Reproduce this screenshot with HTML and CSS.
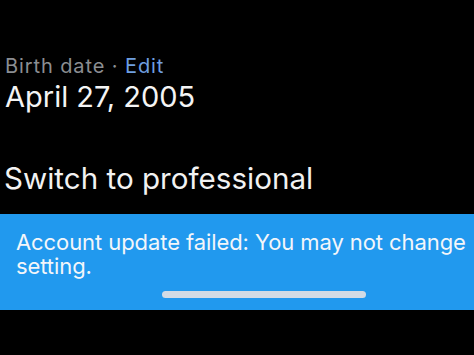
FILE: index.html
```html
<!DOCTYPE html>
<html>
<head>
<meta charset="utf-8">
<link rel="stylesheet" href="styles.css">
</head>
<body>
<div class="screen">
  <section class="info">
    <div class="label">Birth date · <span class="edit">Edit</span></div>
    <div class="value">April 27, 2005</div>
    <div class="switch">Switch to professional</div>
  </section>
  <section class="toast">
    <p class="msg">Account update failed: You may not change setting.</p>
    <div class="handle"></div>
  </section>
</div>
</body>
</html>
```
FILE: styles.css
```css
html, body {
  margin: 0;
  padding: 0;
  background: #000;
}
.screen {
  width: 474px;
  height: 355px;
  background: #000;
  font-family: Inter, "Liberation Sans", sans-serif;
  display: flex;
  flex-direction: column;
  overflow: hidden;
}
.info {
  padding: 52px 0 0 4px;
  height: 214px;
  flex: none;
  box-sizing: border-box;
}
.label {
  color: #8b8e92;
  font-size: 20px;
  letter-spacing: 0.9px;
  line-height: 28px;
  padding-left: 1px;
}
.edit {
  color: #6f9fe0;
}
.value {
  color: #f4f4f4;
  font-size: 29px;
  line-height: 34px;
  padding-left: 1px;
}
.switch {
  color: #f2f2f2;
  font-size: 29.6px;
  line-height: 36px;
  margin-top: 46px;
}
.toast {
  background: #2199ee;
  height: 96px;
  flex: none;
  padding: 16px 0 0 16px;
  box-sizing: border-box;
  display: flex;
  flex-direction: column;
}
.msg {
  margin: 0;
  color: #f3f6fa;
  font-size: 22px;
  letter-spacing: -0.08px;
  line-height: 24px;
}
.handle {
  width: 204px;
  height: 7px;
  border-radius: 4px;
  background: #d2dbe5;
  margin: 13px 0 0 146px;
}
```
